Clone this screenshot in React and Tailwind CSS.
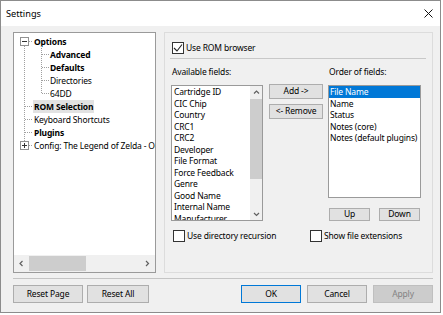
import React from 'react';

const availableFields = [
  'Cartridge ID', 'CIC Chip', 'Country', 'CRC1', 'CRC2', 'Developer', 'File Format',
  'Force Feedback', 'Genre', 'Good Name', 'Internal Name', 'Manufacturer', 'Notes (user)',
];
const orderFields = ['File Name', 'Name', 'Status', 'Notes (core)', 'Notes (default plugins)'];

const treeItems = [
  { label: 'Options', child: false, bold: true },
  { label: 'Advanced', child: true, bold: true },
  { label: 'Defaults', child: true, bold: true },
  { label: 'Directories', child: true },
  { label: '64DD', child: true },
  { label: 'ROM Selection', child: false, bold: true, selected: true },
  { label: 'Keyboard Shortcuts', child: false },
  { label: 'Plugins', child: false, bold: true },
  { label: 'Config: The Legend of Zelda - Ocarina of Time', child: false },
];

function Checkbox({ checked }) {
  return (
    <div className="w-[12px] h-[12px] border border-[#333333] bg-white shrink-0 flex items-center justify-center">
      {checked && (
        <svg width="10" height="10" viewBox="0 0 10 10">
          <path d="M1 5 L4 8 L9 1.5" fill="none" stroke="#222" strokeWidth="1.1" />
        </svg>
      )}
    </div>
  );
}

// win10 style push button
function Btn({ children, className = '', primary, disabled }) {
  let look = 'bg-[#e1e1e1] border-[#adadad] text-black';
  if (primary) look = 'bg-[#e1e1e1] border-[#0078d7] text-black';
  if (disabled) look = 'bg-[#cccccc] border-[#bfbfbf] text-[#838383]';
  return (
    <div className={`border flex items-center justify-center whitespace-nowrap leading-none ${look} ${className}`}>
      {children}
    </div>
  );
}

function Chevron({ dir }) {
  const d = {
    up: 'M1 4.5 L3.5 2 L6 4.5',
    down: 'M1 2 L3.5 4.5 L6 2',
    left: 'M4.5 1 L2 3.5 L4.5 6',
    right: 'M2 1 L4.5 3.5 L2 6',
  }[dir];
  return (
    <svg width="7" height="7" viewBox="0 0 7 7">
      <path d={d} fill="none" stroke="#606060" strokeWidth="1.2" />
    </svg>
  );
}

function TreeLines() {
  const line = { stroke: '#a0a0a0', strokeDasharray: '1 1', fill: 'none' };
  return (
    <svg className="absolute left-0 top-0 pointer-events-none" width="60" height="130">
      {/* root level */}
      <path d="M10.5 13 V108" {...line} />
      <path d="M15 8.5 H19 M11 73.5 H19 M11 86.5 H19 M11 99.5 H19 M15 112.5 H19" {...line} />
      {/* children of Options */}
      <path d="M27.5 13 V60" {...line} />
      <path d="M28 21.5 H35 M28 34.5 H35 M28 47.5 H35 M28 60.5 H35" {...line} />
      {/* expanders */}
      <rect x="6.5" y="4.5" width="8" height="8" fill="#fff" stroke="#919191" />
      <path d="M8 8.5 H13" stroke="#333" />
      <rect x="6.5" y="108.5" width="8" height="8" fill="#fff" stroke="#919191" />
      <path d="M8 112.5 H13 M10.5 110 V115" stroke="#333" />
    </svg>
  );
}

function Tree() {
  return (
    <div className="w-[143px] border border-[#9a9a9a] bg-white flex flex-col overflow-hidden">
      <div className="relative flex-1 pt-[2px] overflow-hidden">
        <TreeLines />
        {treeItems.map((item) => (
          <div
            key={item.label}
            className={`h-[13px] flex items-center whitespace-nowrap ${item.child ? 'pl-[35px]' : 'pl-[19px]'}`}
          >
            <span
              className={`px-[1px] leading-[13px] ${item.bold ? 'font-bold' : ''} ${item.selected ? 'bg-[#e2e2e2]' : ''}`}
            >
              {item.label}
            </span>
          </div>
        ))}
      </div>
      <div className="h-[17px] bg-[#f0f0f0] flex items-center">
        <div className="w-[15px] h-full flex items-center justify-center">
          <Chevron dir="left" />
        </div>
        <div className="w-[57px] h-[15px] bg-[#cdcdcd]" />
        <div className="flex-1" />
        <div className="w-[15px] h-full flex items-center justify-center">
          <Chevron dir="right" />
        </div>
      </div>
    </div>
  );
}

function AvailableList() {
  return (
    <div className="h-[136px] border border-[#9a9a9a] bg-white flex overflow-hidden">
      <div className="flex-1 overflow-hidden pl-[2px]">
        {availableFields.map((f) => (
          <div key={f} className="h-[11.5px] leading-[11.5px] whitespace-nowrap">{f}</div>
        ))}
      </div>
      <div className="w-[12px] bg-[#f0f0f0] flex flex-col">
        <div className="h-[12px] flex items-center justify-center"><Chevron dir="up" /></div>
        <div className="mt-[1px] h-[80px] bg-[#cdcdcd]" />
        <div className="flex-1" />
        <div className="h-[12px] flex items-center justify-center"><Chevron dir="down" /></div>
      </div>
    </div>
  );
}

function OrderList() {
  return (
    <div className="h-[113px] border border-[#9a9a9a] bg-white overflow-hidden">
      {orderFields.map((f, i) => (
        <div
          key={f}
          className={`h-[11.5px] leading-[11.5px] pl-[1px] whitespace-nowrap ${i === 0 ? 'bg-[#0078d7] text-white' : ''}`}
        >
          {f}
        </div>
      ))}
    </div>
  );
}

export default function App() {
  return (
    <div className="w-[443px] h-[315px] bg-white font-['Noto_Sans',sans-serif] text-[8.5px] tracking-[-0.15px] leading-[12px] text-black">
      <div className="w-[441px] h-[313px] border border-[#8c8c8c] flex flex-col">
        {/* title bar */}
        <div className="h-[25px] bg-white flex items-center justify-between pl-[5px] pr-[7px]">
          <span className="text-[9.2px] tracking-normal">Settings</span>
          <svg width="9" height="9" viewBox="0 0 9 9">
            <path d="M0.5 0.5 L8.5 8.5 M8.5 0.5 L0.5 8.5" stroke="#111" strokeWidth="1" />
          </svg>
        </div>

        <div className="flex-1 bg-[#f0f0f0] pl-[12px] pr-[7px] pt-[6px] flex flex-col">
          <div className="h-[241px] flex gap-[8px]">
            <Tree />

            <div className="w-[269px] border border-[#dcdcdc] flex flex-col">
              <div className="mt-[8px] ml-[7px] h-[13px] flex items-center gap-[2px]">
                <Checkbox checked />
                <span>Use ROM browser</span>
              </div>
              <div className="mt-[4px] ml-[5px] mr-[6px] h-px bg-[#c8c8c8]" />

              <div className="mt-[7px] ml-[6px] flex">
                <div className="w-[92px] flex flex-col">
                  <div className="h-[12px] leading-[12px] pl-[1px] whitespace-nowrap">Available fields:</div>
                  <div className="mt-[7px]">
                    <AvailableList />
                  </div>
                </div>

                <div className="ml-[6px] w-[54px] flex flex-col">
                  <Btn className="mt-[18px] h-[15px]">Add -&gt;</Btn>
                  <Btn className="mt-[5px] h-[15px]">&lt;- Remove</Btn>
                </div>

                <div className="ml-[5px] w-[93px] flex flex-col">
                  <div className="h-[12px] leading-[12px] pl-[1px] whitespace-nowrap">Order of fields:</div>
                  <div className="mt-[7px]">
                    <OrderList />
                  </div>
                  <div className="mt-[10px] flex">
                    <Btn className="ml-[1px] w-[41px] h-[13px]">Up</Btn>
                    <Btn className="ml-[9px] w-[41px] h-[13px]">Down</Btn>
                  </div>
                </div>
              </div>

              <div className="mt-[9px] ml-[8px] h-[12px] flex items-center">
                <div className="w-[137px] flex items-center gap-[2px]">
                  <Checkbox />
                  <span className="whitespace-nowrap">Use directory recursion</span>
                </div>
                <div className="flex items-center gap-[2px]">
                  <Checkbox />
                  <span className="whitespace-nowrap">Show file extensions</span>
                </div>
              </div>
            </div>
          </div>

          <div className="mt-[5px] h-px bg-[#c4c4c4]" />

          <div className="mt-[6px] h-[18px] flex justify-between">
            <div className="flex gap-[4px]">
              <Btn className="w-[70px] h-[18px]">Reset Page</Btn>
              <Btn className="w-[62px] h-[18px]">Reset All</Btn>
            </div>
            <div className="flex gap-[6px]">
              <Btn primary className="w-[60px] h-[18px]">OK</Btn>
              <Btn className="w-[60px] h-[18px]">Cancel</Btn>
              <Btn disabled className="w-[60px] h-[18px]">Apply</Btn>
            </div>
          </div>
        </div>
      </div>
    </div>
  );
}
